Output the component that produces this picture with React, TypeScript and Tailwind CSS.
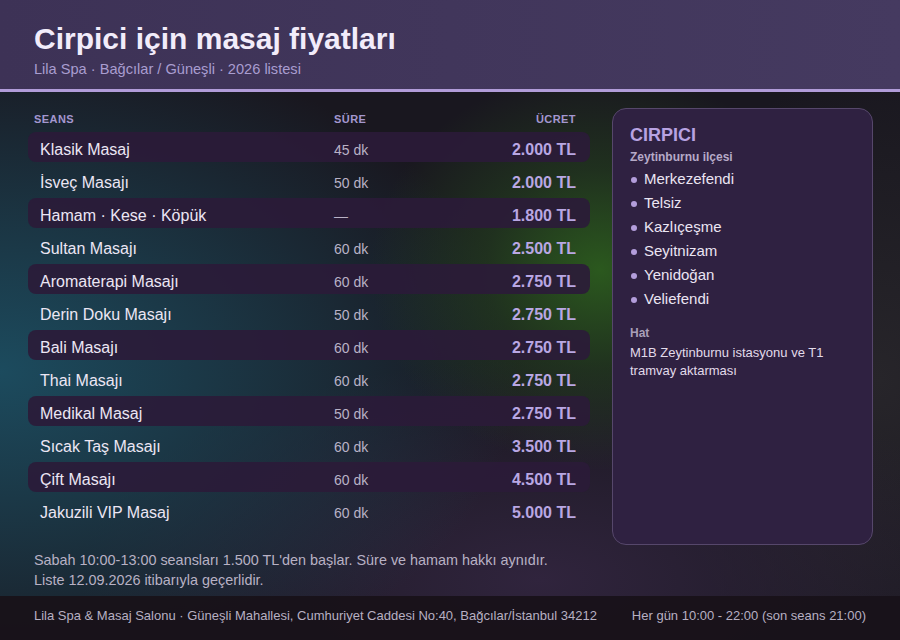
import React from "react";

const rows: [string, string, string][] = [
  ["Klasik Masaj", "45 dk", "2.000 TL"],
  ["İsveç Masajı", "50 dk", "2.000 TL"],
  ["Hamam · Kese · Köpük", "—", "1.800 TL"],
  ["Sultan Masajı", "60 dk", "2.500 TL"],
  ["Aromaterapi Masajı", "60 dk", "2.750 TL"],
  ["Derin Doku Masajı", "50 dk", "2.750 TL"],
  ["Bali Masajı", "60 dk", "2.750 TL"],
  ["Thai Masajı", "60 dk", "2.750 TL"],
  ["Medikal Masaj", "50 dk", "2.750 TL"],
  ["Sıcak Taş Masajı", "60 dk", "3.500 TL"],
  ["Çift Masajı", "60 dk", "4.500 TL"],
  ["Jakuzili VIP Masaj", "60 dk", "5.000 TL"],
];

const areas = ["Merkezefendi", "Telsiz", "Kazlıçeşme", "Seyitnizam", "Yenidoğan", "Veliefendi"];

export default function App() {
  return (
    <div className="w-[900px] h-[640px] overflow-hidden flex flex-col font-['Liberation_Sans',Arial,sans-serif] bg-[#19171f] bg-[radial-gradient(ellipse_230px_200px_at_600px_270px,rgba(44,92,30,0.95)_0%,rgba(40,80,30,0.45)_50%,transparent_100%),radial-gradient(ellipse_520px_340px_at_0%_58%,#1c4b5e_0%,rgba(28,72,90,0.6)_45%,transparent_100%),radial-gradient(ellipse_460px_220px_at_540px_580px,#30243d_0%,transparent_100%),radial-gradient(ellipse_220px_320px_at_880px_380px,#27252a_0%,transparent_100%)]">
      {/* Header */}
      <header className="shrink-0 bg-[linear-gradient(90deg,#3d3256,#453a60)] border-b-[3px] border-[#b19cd9] pt-[21px] pb-[10px] px-[34px]">
        <h1 className="text-[30px] leading-[36px] font-bold text-[#f2ecfa]">Cirpici için masaj fiyatları</h1>
        <p className="mt-[2px] text-[14.6px] leading-[20px] text-[#a99dd0]">Lila Spa · Bağcılar / Güneşli · 2026 listesi</p>
      </header>

      {/* Main */}
      <main className="flex-1 min-h-0 flex pt-4 pl-[28px] pr-[27px] gap-[22px]">
        <section className="w-[562px] shrink-0">
          <div className="grid grid-cols-[300px_1fr_auto] pl-[6px] pr-[14px] pt-[3px] pb-[5px] text-[11px] leading-[16px] font-bold tracking-[0.04em] text-[#a497cf]">
            <span>SEANS</span>
            <span>SÜRE</span>
            <span>ÜCRET</span>
          </div>
          <div className="flex flex-col gap-[3px]">
            {rows.map(([name, dur, price], i) => (
              <div
                key={name}
                className={
                  "h-[30px] grid grid-cols-[294px_1fr_auto] items-baseline pl-3 pr-[14px] pt-[8px] rounded-lg " +
                  (i % 2 === 0 ? "bg-[#2b1b39]/90" : "")
                }
              >
                <span className="text-[16px] leading-[20px] text-[#ece6f4]">{name}</span>
                <span className="text-[14px] leading-[20px] text-[#b9b2c6]">{dur}</span>
                <span className="text-[16px] leading-[20px] font-bold text-[#b9a7e3]">{price}</span>
              </div>
            ))}
          </div>
        </section>

        <aside className="w-[261px] shrink-0 rounded-[14px] border border-[#56476b] bg-[#2f2141] pt-[15px] pl-[17px] pr-[17px]">
          <h2 className="text-[18px] leading-[22px] font-bold text-[#b8a2e2]">CIRPICI</h2>
          <p className="mt-[2.5px] text-[12px] leading-[16px] font-bold text-[#b6aac8]">Zeytinburnu ilçesi</p>
          <ul className="mt-[2px]">
            {areas.map((a) => (
              <li key={a} className="flex items-center h-[24px] text-[15px] leading-[24px] text-[#ebe5f3]">
                <span className="w-[6px] h-[6px] rounded-full bg-[#b39ddb] ml-px mr-[7px] mt-[2px]" />
                {a}
              </li>
            ))}
          </ul>
          <p className="mt-[14px] text-[12px] leading-[16px] font-bold text-[#a99fb8]">Hat</p>
          <p className="mt-[3px] text-[13px] leading-[18px] text-[#e2dbea]">M1B Zeytinburnu istasyonu ve T1 tramvay aktarması</p>
        </aside>
      </main>

      {/* Note */}
      <div className="shrink-0 mt-[5px] mb-[6px] px-[34px] text-[14.4px] leading-[20px] text-[#b8b1c4]">
        <p>Sabah 10:00-13:00 seansları 1.500 TL'den başlar. Süre ve hamam hakkı aynıdır.</p>
        <p>Liste 12.09.2026 itibarıyla geçerlidir.</p>
      </div>

      {/* Footer */}
      <footer className="shrink-0 h-[44px] bg-[#181219]/95 px-[34px] pt-[10.5px] flex justify-between text-[13px] leading-[18px] text-[#b7b0c2]">
        <span>Lila Spa &amp; Masaj Salonu · Güneşli Mahallesi, Cumhuriyet Caddesi No:40, Bağcılar/İstanbul 34212</span>
        <span>Her gün 10:00 - 22:00 (son seans 21:00)</span>
      </footer>
    </div>
  );
}
